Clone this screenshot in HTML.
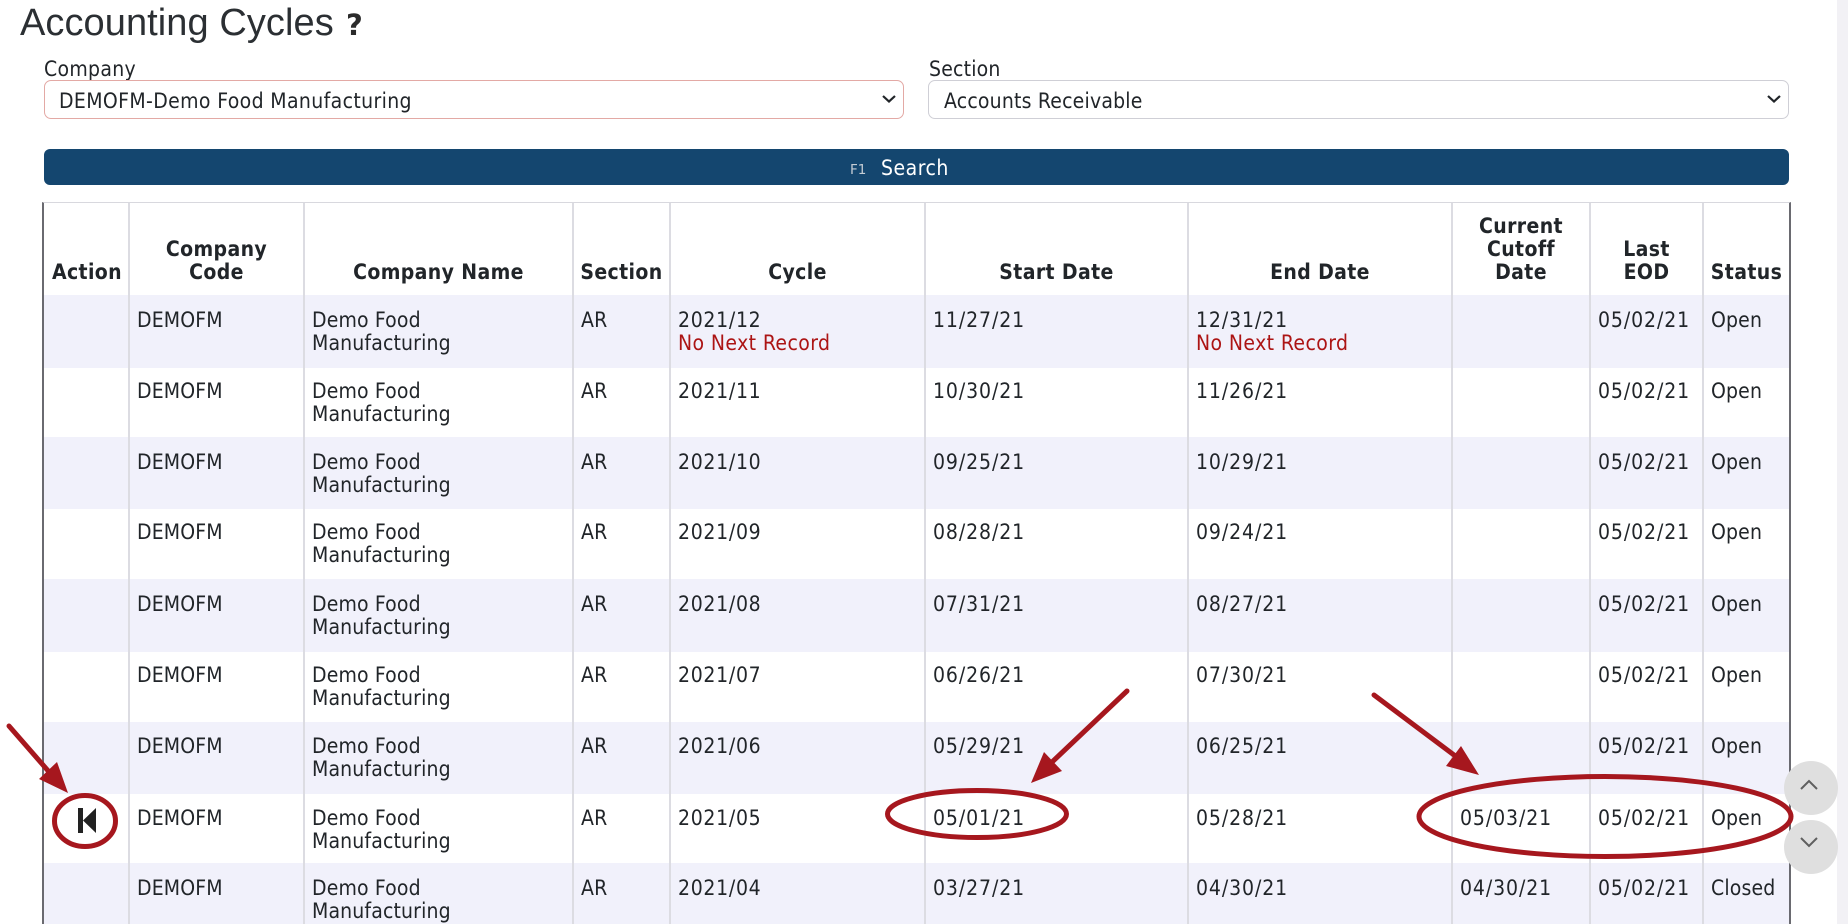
<!DOCTYPE html>
<html><head><meta charset="utf-8"><title>Accounting Cycles</title>
<style>
html,body{margin:0;padding:0;width:1848px;height:924px;overflow:hidden;background:#fff}
body{position:relative;font-family:"DejaVu Sans Condensed","DejaVu Sans","Liberation Sans",sans-serif;font-stretch:condensed;font-size:21px;color:#212529}
.a{position:absolute;white-space:nowrap}
.sel{position:absolute;top:80px;height:39px;box-sizing:border-box;border-radius:7px;background:#fff;line-height:40px;padding-left:14px;letter-spacing:.37px}
.wrap{position:absolute;left:42px;top:202px;width:1749px;height:722px;overflow:hidden;box-sizing:border-box;border-left:2px solid #6a6a70;border-right:2px solid #6a6a70;border-top:1px solid #d8d8de}
table{border-collapse:separate;border-spacing:0;table-layout:fixed;width:1745px}
td,th{box-sizing:border-box;border-right:2px solid #dcdce2;padding:12px 4px 0 7px;vertical-align:top;line-height:23px;font-weight:400;overflow:hidden;letter-spacing:.15px}
th{font-weight:700;text-align:center;vertical-align:bottom;padding:0 2px 11px 2px;line-height:23px;letter-spacing:.38px}
th:first-child{padding-left:4px}
td:last-child,th:last-child{border-right:0}
td:nth-child(n+5):nth-child(-n+9){letter-spacing:.9px}
td:nth-child(5){letter-spacing:.7px !important}
tr.s td{background:#f1f1fb;padding-top:14px}
tr.t td{padding-top:13px}
tr.u td{padding-top:13px}
.r{color:#ac1414;letter-spacing:.4px}
</style></head><body>
<div style="position:absolute;left:1837px;top:0;width:11px;height:924px;background:#f2f1f5"></div>
<div class="a" style="left:20px;top:1px;font-family:'Liberation Sans',sans-serif;font-stretch:normal;font-size:38px;line-height:44px;letter-spacing:.07px;color:#2b2f33">Accounting Cycles</div>
<div class="a" style="left:346px;top:7px;font-family:'DejaVu Sans',sans-serif;font-stretch:normal;font-weight:700;font-size:29px;line-height:36px;color:#2b2b2b">?</div>
<div class="a" style="left:44px;top:56px;line-height:26px;letter-spacing:.3px">Company</div>
<div class="a" style="left:929px;top:56px;line-height:26px;letter-spacing:.2px">Section</div>
<div class="sel" style="left:44px;width:860px;border:1px solid #e3a9a5">DEMOFM-Demo Food Manufacturing</div>
<div class="sel" style="left:928px;width:861px;border:1px solid #cfcfd6;letter-spacing:.2px;padding-left:15px">Accounts Receivable</div>
<div style="position:absolute;left:44px;top:149px;width:1745px;height:36px;background:#14466f;border-radius:6px"></div>
<div class="a" style="left:850px;top:161px;font-family:'DejaVu Sans',sans-serif;font-stretch:normal;font-size:13.5px;line-height:18px;color:#c4ccd4">F1</div>
<div class="a" style="left:881px;top:156px;line-height:24px;color:#fff;letter-spacing:.5px">Search</div>
<div class="wrap"><table>
<colgroup><col style="width:86px"><col style="width:175px"><col style="width:269px"><col style="width:97px"><col style="width:255px"><col style="width:263px"><col style="width:264px"><col style="width:138px"><col style="width:113px"><col style="width:85px"></colgroup>
<tr style="height:92px"><th>Action</th><th>Company<br>Code</th><th>Company Name</th><th>Section</th><th>Cycle</th><th>Start Date</th><th>End Date</th><th>Current<br>Cutoff<br>Date</th><th>Last<br>EOD</th><th>Status</th></tr>
<tr class="s" style="height:73px"><td></td><td>DEMOFM</td><td>Demo Food<br>Manufacturing</td><td>AR</td><td>2021/12<br><span class="r">No Next Record</span></td><td>11/27/21</td><td>12/31/21<br><span class="r">No Next Record</span></td><td></td><td>05/02/21</td><td>Open</td></tr>
<tr style="height:69px"><td></td><td>DEMOFM</td><td>Demo Food<br>Manufacturing</td><td>AR</td><td>2021/11</td><td>10/30/21</td><td>11/26/21</td><td></td><td>05/02/21</td><td>Open</td></tr>
<tr class="s" style="height:72px"><td></td><td>DEMOFM</td><td>Demo Food<br>Manufacturing</td><td>AR</td><td>2021/10</td><td>09/25/21</td><td>10/29/21</td><td></td><td>05/02/21</td><td>Open</td></tr>
<tr style="height:70px"><td></td><td>DEMOFM</td><td>Demo Food<br>Manufacturing</td><td>AR</td><td>2021/09</td><td>08/28/21</td><td>09/24/21</td><td></td><td>05/02/21</td><td>Open</td></tr>
<tr class="s" style="height:73px"><td></td><td>DEMOFM</td><td>Demo Food<br>Manufacturing</td><td>AR</td><td>2021/08</td><td>07/31/21</td><td>08/27/21</td><td></td><td>05/02/21</td><td>Open</td></tr>
<tr style="height:70px"><td></td><td>DEMOFM</td><td>Demo Food<br>Manufacturing</td><td>AR</td><td>2021/07</td><td>06/26/21</td><td>07/30/21</td><td></td><td>05/02/21</td><td>Open</td></tr>
<tr class="s u" style="height:72px"><td></td><td>DEMOFM</td><td>Demo Food<br>Manufacturing</td><td>AR</td><td>2021/06</td><td>05/29/21</td><td>06/25/21</td><td></td><td>05/02/21</td><td>Open</td></tr>
<tr class="t" style="height:69px"><td></td><td>DEMOFM</td><td>Demo Food<br>Manufacturing</td><td>AR</td><td>2021/05</td><td>05/01/21</td><td>05/28/21</td><td>05/03/21</td><td>05/02/21</td><td>Open</td></tr>
<tr class="s" style="height:73px"><td></td><td>DEMOFM</td><td>Demo Food<br>Manufacturing</td><td>AR</td><td>2021/04</td><td>03/27/21</td><td>04/30/21</td><td>04/30/21</td><td>05/02/21</td><td>Closed</td></tr>
</table></div>
<svg width="1848" height="924" viewBox="0 0 1848 924" style="position:absolute;left:0;top:0">
<g fill="none" stroke="#212529" stroke-width="2.2"><path d="M883 96l6 5.500 6-5.500"/><path d="M1768 96l6 5.500 6-5.500"/></g>
<circle cx="1811" cy="788" r="27" fill="#dfdfdf"/><circle cx="1811" cy="847" r="27" fill="#dfdfdf"/>
<g fill="none" stroke="#5f5f5f" stroke-width="2"><path d="M1801 789l8-8 8 8"/><path d="M1801 838l8 8 8-8"/></g>
<path d="M78 808h5v25h-5zM83 820.500L96 808v25z" fill="#222"/>
<g fill="none" stroke="#a6171e" stroke-width="5"><ellipse cx="85" cy="821" rx="30.500" ry="25.500"/><ellipse cx="977" cy="814" rx="89.500" ry="23.500"/><ellipse cx="1605" cy="816.500" rx="186" ry="40"/></g>
<g stroke="#a6171e" stroke-width="5" stroke-linecap="round"><path d="M9 726L50 773"/><path d="M1127 691L1050 764"/><path d="M1374 695L1458 758"/></g>
<g fill="#a6171e"><path d="M68 793L39 779 57 762z"/><path d="M1031 783L1044 752 1062 771z"/><path d="M1479 775L1446 766 1461 746z"/></g>
</svg>
</body></html>
